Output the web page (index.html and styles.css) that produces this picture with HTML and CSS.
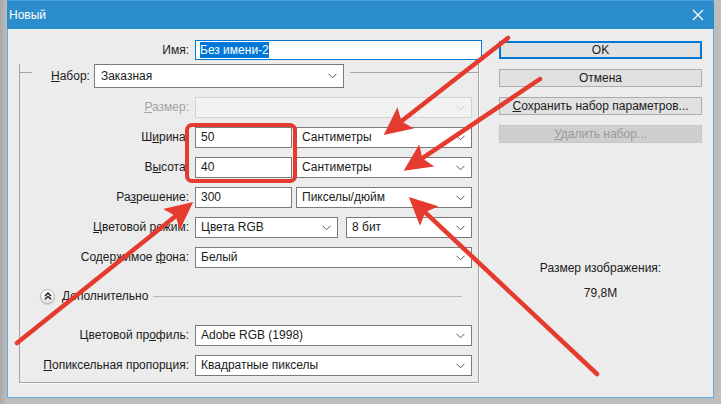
FILE: index.html
```html
<!DOCTYPE html>
<html lang="ru">
<head>
<meta charset="utf-8">
<title>Новый</title>
<link rel="stylesheet" href="styles.css">
</head>
<body>
<div class="window">
  <div class="titlebar">
    <span class="title">Новый</span>
    <svg class="close" width="12" height="12" viewBox="0 0 12 12"><path d="M1 1 L11 11 M11 1 L1 11" stroke="#fff" stroke-width="1.2" fill="none"/></svg>
  </div>
  <div class="body">
    <div class="main">
      <div class="name-row">
        <label class="lbl name-lbl">Имя:</label>
        <div class="input name-input"><span class="sel-text">Без имени-2</span></div>
      </div>
      <div class="group">
        <div class="group-head">
          <span class="gline gline-left"></span>
          <label class="head-lbl"><u>Н</u>абор:</label>
          <div class="select head-select"><span class="val">Заказная</span><svg class="chev" width="9" height="6" viewBox="0 0 9 6"><polyline points="0.5,0.8 4.5,4.8 8.5,0.8" fill="none" stroke="#5a5a5a" stroke-width="1"/></svg></div>
          <span class="gline gline-right"></span>
        </div>
        <div class="rows">
          <div class="row">
            <label class="lbl disabled"><u>Р</u>азмер:</label>
            <div class="select full is-disabled"><span class="val"></span><svg class="chev" width="9" height="6" viewBox="0 0 9 6"><polyline points="0.5,0.8 4.5,4.8 8.5,0.8" fill="none" stroke="#c4c4c4" stroke-width="1"/></svg></div>
          </div>
          <div class="row">
            <label class="lbl">Ш<u>и</u>рина:</label>
            <div class="input num">50</div>
            <div class="select unit"><span class="val">Сантиметры</span><svg class="chev" width="9" height="6" viewBox="0 0 9 6"><polyline points="0.5,0.8 4.5,4.8 8.5,0.8" fill="none" stroke="#5a5a5a" stroke-width="1"/></svg></div>
          </div>
          <div class="row">
            <label class="lbl">В<u>ы</u>сота:</label>
            <div class="input num">40</div>
            <div class="select unit"><span class="val">Сантиметры</span><svg class="chev" width="9" height="6" viewBox="0 0 9 6"><polyline points="0.5,0.8 4.5,4.8 8.5,0.8" fill="none" stroke="#5a5a5a" stroke-width="1"/></svg></div>
          </div>
          <div class="row">
            <label class="lbl">Ра<u>з</u>решение:</label>
            <div class="input num">300</div>
            <div class="select unit"><span class="val">Пикселы/дюйм</span><svg class="chev" width="9" height="6" viewBox="0 0 9 6"><polyline points="0.5,0.8 4.5,4.8 8.5,0.8" fill="none" stroke="#5a5a5a" stroke-width="1"/></svg></div>
          </div>
          <div class="row">
            <label class="lbl"><u>Ц</u>ветовой режим:</label>
            <div class="select mode"><span class="val">Цвета RGB</span><svg class="chev" width="9" height="6" viewBox="0 0 9 6"><polyline points="0.5,0.8 4.5,4.8 8.5,0.8" fill="none" stroke="#5a5a5a" stroke-width="1"/></svg></div>
            <div class="select bits"><span class="val">8 бит</span><svg class="chev" width="9" height="6" viewBox="0 0 9 6"><polyline points="0.5,0.8 4.5,4.8 8.5,0.8" fill="none" stroke="#5a5a5a" stroke-width="1"/></svg></div>
          </div>
          <div class="row">
            <label class="lbl">Содержимое <u>ф</u>она:</label>
            <div class="select full"><span class="val">Белый</span><svg class="chev" width="9" height="6" viewBox="0 0 9 6"><polyline points="0.5,0.8 4.5,4.8 8.5,0.8" fill="none" stroke="#5a5a5a" stroke-width="1"/></svg></div>
          </div>
          <div class="adv-row">
            <span class="adv-btn"><svg width="8" height="8" viewBox="0 0 8 8"><polyline points="1,4 4,1 7,4" fill="none" stroke="#111" stroke-width="1.3"/><polyline points="1,7.3 4,4.3 7,7.3" fill="none" stroke="#111" stroke-width="1.3"/></svg></span>
            <span class="adv-text"><u>Д</u>ополнительно</span>
            <span class="adv-line"></span>
          </div>
          <div class="row row-profile">
            <label class="lbl">Цветовой пр<u>о</u>филь:</label>
            <div class="select full"><span class="val">Adobe RGB (1998)</span><svg class="chev" width="9" height="6" viewBox="0 0 9 6"><polyline points="0.5,0.8 4.5,4.8 8.5,0.8" fill="none" stroke="#5a5a5a" stroke-width="1"/></svg></div>
          </div>
          <div class="row">
            <label class="lbl"><u>П</u>опиксельная пропорция:</label>
            <div class="select full"><span class="val">Квадратные пикселы</span><svg class="chev" width="9" height="6" viewBox="0 0 9 6"><polyline points="0.5,0.8 4.5,4.8 8.5,0.8" fill="none" stroke="#5a5a5a" stroke-width="1"/></svg></div>
          </div>
        </div>
      </div>
    </div>
    <div class="side">
      <div class="btn btn-default">OK</div>
      <div class="btn">Отмена</div>
      <div class="btn"><u>С</u>охранить набор параметров...</div>
      <div class="btn btn-disabled"><u>У</u>далить набор...</div>
      <div class="size-label">Размер изображения:</div>
      <div class="size-value">79,8M</div>
    </div>
  </div>
</div>
<div class="highlight"></div>
<svg class="arrows" width="721" height="404" viewBox="0 0 721 404">
  <defs>
    <marker id="head" markerUnits="userSpaceOnUse" markerWidth="30" markerHeight="30" viewBox="0 -14 28 28" refX="4" refY="0" orient="auto">
      <path d="M0,-12.5 L26,0 L0,12.5 L5,0 Z" fill="#e53b2f"/>
    </marker>
  </defs>
  <g stroke="#e53b2f" stroke-width="4.5" stroke-linecap="round" fill="none">
    <line x1="508" y1="38" x2="402.3" y2="120.5" marker-end="url(#head)"/>
    <line x1="540" y1="79" x2="423.2" y2="157.7" marker-end="url(#head)"/>
    <line x1="17" y1="343" x2="174.8" y2="216.7" marker-end="url(#head)"/>
    <line x1="597" y1="374" x2="426" y2="213.1" marker-end="url(#head)"/>
  </g>
</svg>
</body>
</html>
```
FILE: styles.css
```css
* { box-sizing: border-box; }
html, body {
  margin: 0;
  padding: 0;
}
body {
  width: 721px;
  height: 404px;
  overflow: hidden;
  background: linear-gradient(90deg, #a9a9a9 0, #bdbdbd 7px, #bdbdbd 100%);
  font-family: "Liberation Sans", Arial, sans-serif;
  font-size: 12px;
  color: #1b1b1b;
  position: relative;
}
u { text-decoration: underline; text-underline-offset: 1px; }

.window {
  margin-left: 7px;
  width: 707px;
  height: 398px;
  display: flex;
  flex-direction: column;
  background: #ececec;
}
.titlebar {
  height: 29px;
  background: #2b8dcb;
  display: flex;
  align-items: center;
  justify-content: space-between;
  padding: 0 10px 1px 2px;
  color: #fff;
  border-top: 1px solid #4aa1d8;
}
.title { font-size: 12px; }
.close { margin-top: 0; }

.body {
  flex: 1;
  display: flex;
  padding-top: 11px;
  border: 1px solid #63ace0;
  border-top: none;
}
.main {
  width: 472px;
  padding-left: 11px;
}
.lbl {
  width: 170px;
  text-align: right;
  flex: none;
  line-height: 20px;
}
.lbl.disabled { color: #a3a3a3; }
.name-row {
  display: flex;
  gap: 6px;
  height: 20px;
}
.input {
  background: #fff;
  border: 1px solid #7a7a7a;
  height: 21px;
  line-height: 19px;
  padding-left: 5px;
  flex: none;
}
.name-input {
  width: 287px;
  height: 20px;
  border-color: #0078d7;
  line-height: 18px;
  padding-left: 4px;
}
.sel-text {
  background: #0078d7;
  color: #fff;
  padding: 1px 0;
}

.group {
  margin-top: 12px;
  width: 460px;
  border: 1px solid #a3a3a3;
  border-top: none;
  box-shadow: 1px 1px 0 #fafafa;
  padding: 0 6px 6px 0;
}
.group-head {
  display: flex;
  align-items: flex-start;
  margin-top: -8px;
  margin-left: -1px;
  margin-right: -7px;
  height: 24px;
}
.gline {
  border-top: 1px solid #a3a3a3;
  margin-top: 8px;
  height: 0;
}
.gline-left { width: 13px; }
.gline-right { flex: 1; margin-left: 6px; }
.head-lbl {
  margin-left: 19px;
  margin-right: 4px;
  line-height: 24px;
}
.select {
  position: relative;
  background: #fff;
  border: 1px solid #7a7a7a;
  height: 21px;
  line-height: 19px;
  padding-left: 5px;
  display: flex;
  align-items: center;
  justify-content: space-between;
  padding-right: 6px;
  flex: none;
}
.head-select { width: 250px; height: 24px; padding-left: 6px; }
.select.is-disabled { background: #f2f2f2; border-color: #d2d2d2; }
.full { width: 277px; }
.num { width: 97px; }
.unit { width: 176px; margin-left: 4px; }
.mode { width: 143px; }
.bits { width: 126px; margin-left: 8px; }

.rows {
  display: flex;
  flex-direction: column;
  gap: 9px;
  margin-top: 9px;
}
.row {
  display: flex;
  gap: 0;
  height: 21px;
}
.row .lbl { width: 169px; margin-right: 6px; }

.adv-row {
  display: flex;
  align-items: center;
  height: 16px;
  margin-top: 11px;
}
.adv-btn {
  width: 15px;
  height: 15px;
  margin-left: 20px;
  border-radius: 50%;
  border: 1px solid #b4b4b4;
  background: linear-gradient(#ffffff, #e2e2e2);
  box-shadow: 0 1px 1px rgba(0,0,0,0.15);
  display: flex;
  align-items: center;
  justify-content: center;
  flex: none;
}
.adv-text { margin-left: 7px; }
.adv-line {
  flex: 1;
  border-top: 1px solid #b8b8b8;
  margin-left: 5px;
  margin-right: 10px;
  height: 0;
}
.row-profile { margin-top: 12px; }

.side {
  margin-left: 19px;
  width: 203px;
  display: flex;
  flex-direction: column;
}
.btn {
  height: 18px;
  background: #e1e1e1;
  border: 1px solid #adadad;
  text-align: center;
  line-height: 16px;
  margin-top: 10px;
}
.btn-default {
  margin-top: 1px;
  border: 2px solid #0078d7;
  line-height: 14px;
}
.btn-disabled {
  background: #cfcfcf;
  border-color: #c6c6c6;
  color: #9a9a9a;
}
.size-label {
  margin-top: 118px;
  text-align: center;
  line-height: 15px;
  padding-left: 0;
}
.size-value {
  margin-top: 10px;
  text-align: center;
  line-height: 15px;
}

.highlight {
  position: absolute;
  left: 185px;
  top: 123px;
  width: 112px;
  height: 60px;
  border: 4px solid #e53b2f;
  border-radius: 7px;
}
.arrows {
  position: absolute;
  left: 0;
  top: 0;
}
```
